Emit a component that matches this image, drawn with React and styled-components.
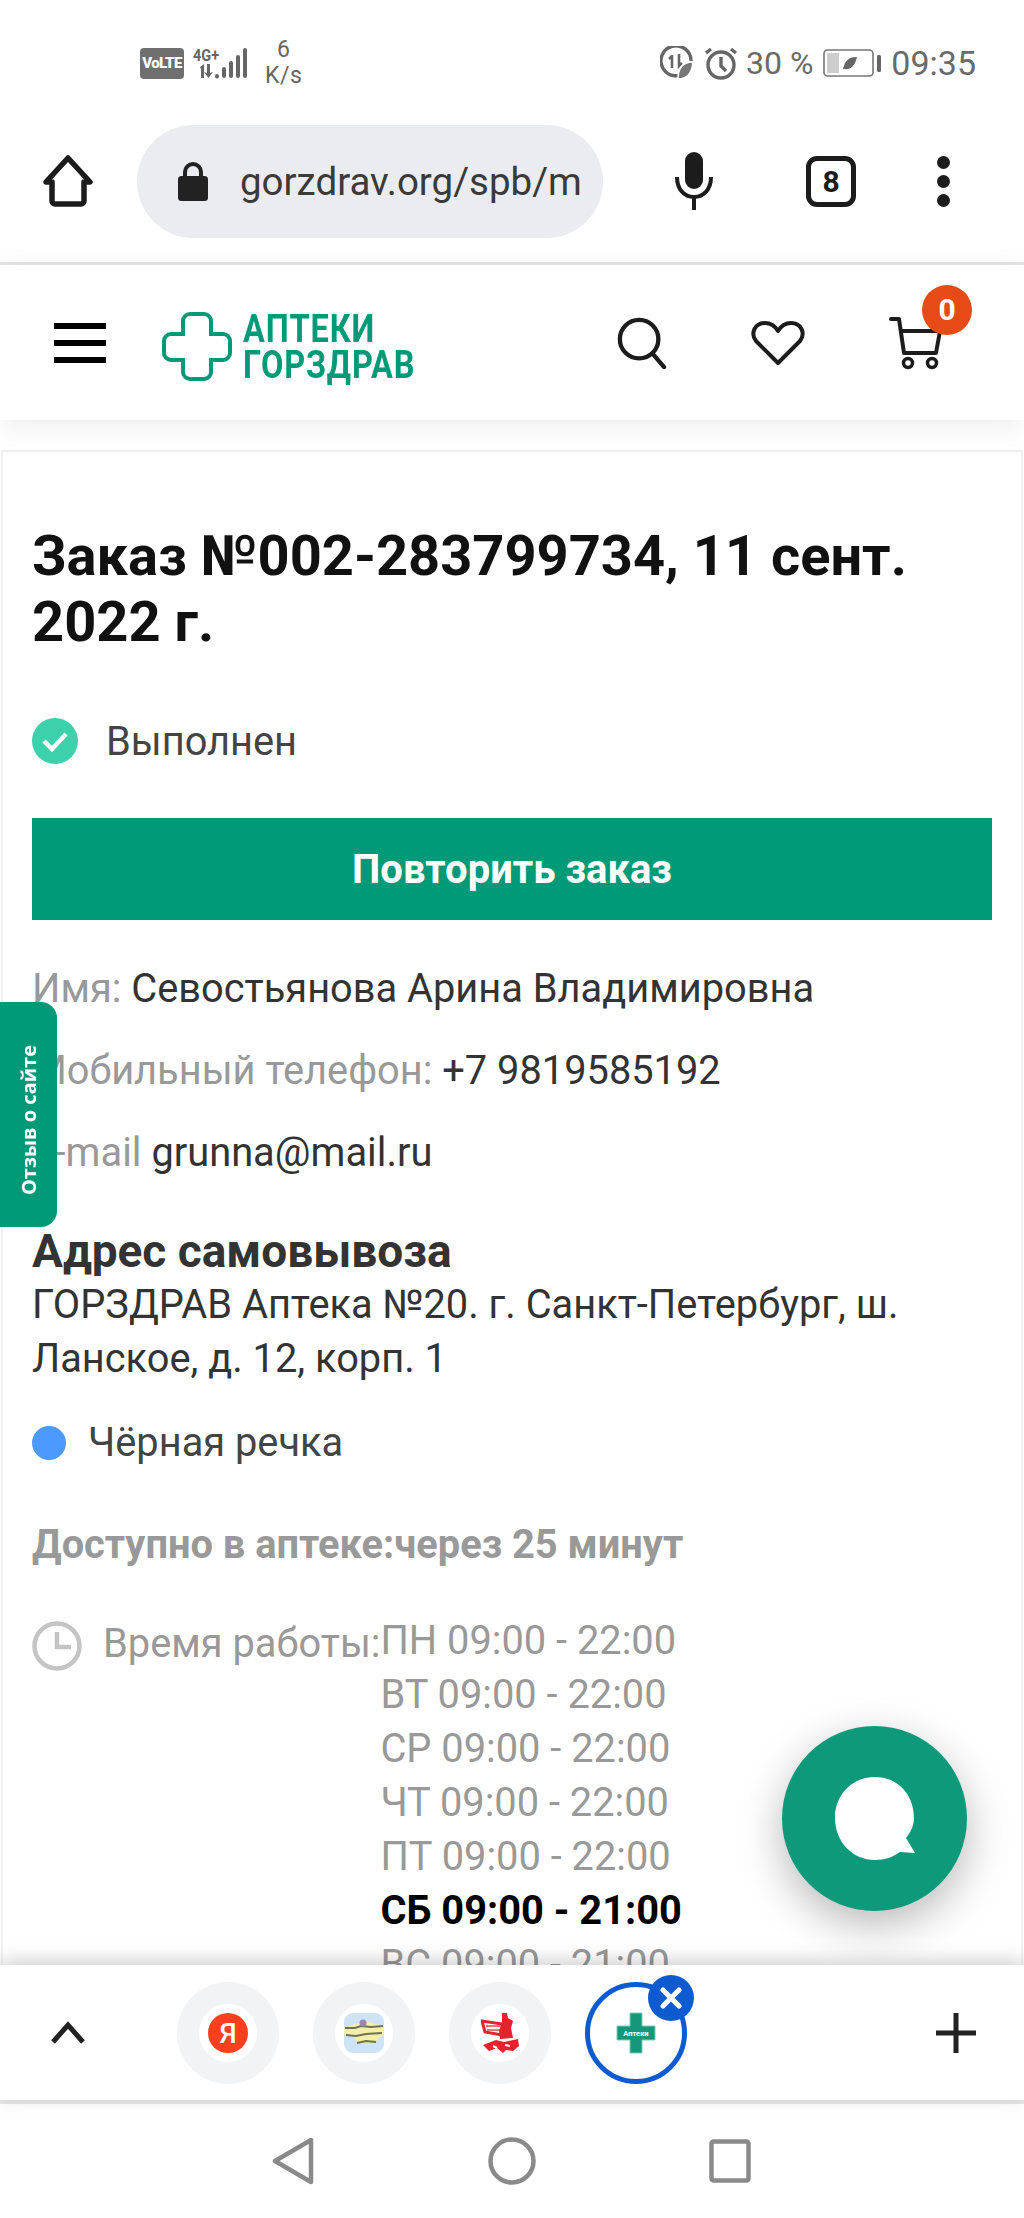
import React from 'react';
import styled, { createGlobalStyle } from 'styled-components';

const GlobalStyle = createGlobalStyle`
  html, body {
    margin: 0;
    padding: 0;
    background: #fff;
  }
  * {
    box-sizing: border-box;
  }
`;

const hours = [
  { day: 'ПН', time: '09:00 - 22:00' },
  { day: 'ВТ', time: '09:00 - 22:00' },
  { day: 'СР', time: '09:00 - 22:00' },
  { day: 'ЧТ', time: '09:00 - 22:00' },
  { day: 'ПТ', time: '09:00 - 22:00' },
  { day: 'СБ', time: '09:00 - 21:00', today: true },
  { day: 'ВС', time: '09:00 - 21:00' },
];

function App() {
  return (
    <Screen>
      <GlobalStyle />
      <StatusBar>
        <StatusLeft>
          <VolteBadge>VoLTE</VolteBadge>
          <SignalIcon />
          <Speed>
            <span>6</span>
            <span>K/s</span>
          </Speed>
        </StatusLeft>
        <StatusRight>
          <DataSaverIcon />
          <AlarmIcon />
          <Percent>30 %</Percent>
          <BatteryIcon />
          <Clock>09:35</Clock>
        </StatusRight>
      </StatusBar>

      <BrowserBar>
        <svg width="50" height="52" viewBox="0 0 50 52" fill="none" stroke="#1c1c1c" strokeWidth="5.5" strokeLinejoin="round">
          <path d="M25 3 47 27H41V46a3 3 0 0 1-3 3H12a3 3 0 0 1-3-3V27H3Z" />
        </svg>
        <UrlPill>
          <svg width="30" height="40" viewBox="0 0 30 40">
            <path d="M7 17V11a8 8 0 0 1 16 0v6" fill="none" stroke="#222" strokeWidth="4" />
            <rect x="0" y="15" width="30" height="25" rx="3.5" fill="#222" />
          </svg>
          <UrlText>gorzdrav.org/spb/m</UrlText>
        </UrlPill>
        <svg width="38" height="58" viewBox="0 0 38 58" fill="none">
          <rect x="10" y="0" width="18" height="37" rx="9" fill="#1c1c1c" />
          <path d="M2 25c0 12 7 20 17 20s17-8 17-20" stroke="#1c1c1c" strokeWidth="4" />
          <path d="M19 44v14" stroke="#1c1c1c" strokeWidth="4" />
        </svg>
        <TabCounter>8</TabCounter>
        <Dots>
          <i />
          <i />
          <i />
        </Dots>
      </BrowserBar>

      <SiteHeader>
        <Burger>
          <i />
          <i />
          <i />
        </Burger>
        <Logo>
          <svg width="70" height="69" viewBox="0 0 70 69" fill="none" stroke="#009a78" strokeWidth="4">
            <path d="M28 2h14a7 7 0 0 1 7 7v13h12a7 7 0 0 1 7 7v12a7 7 0 0 1-7 7H49v12a7 7 0 0 1-7 7H28a7 7 0 0 1-7-7V48H9a7 7 0 0 1-7-7V29a7 7 0 0 1 7-7h12V9a7 7 0 0 1 7-7Z" />
          </svg>
          <LogoText>
            <span>АПТЕКИ</span>
            <span>ГОРЗДРАВ</span>
          </LogoText>
        </Logo>
        <HeaderIcons>
          <svg width="50" height="52" viewBox="0 0 52 54" fill="none" stroke="#1c1c1c" strokeWidth="4.5" strokeLinecap="round">
            <circle cx="23" cy="23" r="20" />
            <path d="M37 38 49 52" />
          </svg>
          <svg width="54" height="46" viewBox="0 0 54 46" fill="none" stroke="#1c1c1c" strokeWidth="4" strokeLinejoin="round">
            <path d="M27 43 5 21C-1 13 4 3 14 3c6 0 10 3 13 8 3-5 7-8 13-8 10 0 15 10 9 18Z" />
          </svg>
          <CartWrap>
            <svg width="56" height="54" viewBox="0 0 56 54" fill="none" stroke="#1c1c1c" strokeWidth="4" strokeLinecap="round" strokeLinejoin="round">
              <path d="M2 3h8l5 34h32l4-22H12" />
              <circle cx="19" cy="47" r="4.5" strokeWidth="3.5" />
              <circle cx="43" cy="47" r="4.5" strokeWidth="3.5" />
            </svg>
            <CartBadge>0</CartBadge>
          </CartWrap>
        </HeaderIcons>
      </SiteHeader>

      <Page>
        <Card>
          <Title>Заказ №002-283799734, 11 сент. 2022 г.</Title>
          <OrderStatus>
            <svg width="46" height="46" viewBox="0 0 46 46">
              <circle cx="23" cy="23" r="23" fill="#3cd1aa" />
              <path d="M12 23l8 8 14-15" fill="none" stroke="#fff" strokeWidth="4.5" />
            </svg>
            Выполнен
          </OrderStatus>
          <RepeatButton>Повторить заказ</RepeatButton>
          <Contacts>
            <ContactRow>
              <Muted>Имя: </Muted>Севостьянова Арина Владимировна
            </ContactRow>
            <ContactRow>
              <Muted>Мобильный телефон: </Muted>+7 9819585192
            </ContactRow>
            <ContactRow>
              <Muted>E-mail </Muted>grunna@mail.ru
            </ContactRow>
          </Contacts>
          <SectionTitle>Адрес самовывоза</SectionTitle>
          <Address>ГОРЗДРАВ Аптека №20. г. Санкт-Петербург, ш. Ланское, д. 12, корп. 1</Address>
          <Metro>
            <MetroDot />
            Чёрная речка
          </Metro>
          <Availability>Доступно в аптеке:через 25 минут</Availability>
          <Schedule>
            <svg width="50" height="50" viewBox="0 0 50 50" fill="none" stroke="#c4c4c4" strokeWidth="4.5">
              <circle cx="25" cy="25" r="22.5" />
              <path d="M25 11v15h14" />
            </svg>
            <ScheduleLabel>Время работы:</ScheduleLabel>
            <HoursList>
              {hours.map((h) => (
                <HoursRow key={h.day} $today={h.today}>
                  {h.day} {h.time}
                </HoursRow>
              ))}
            </HoursList>
          </Schedule>
        </Card>
        <FeedbackTab>
          <span>Отзыв о сайте</span>
        </FeedbackTab>
        <ChatButton>
          <svg width="92" height="92" viewBox="0 0 92 92">
            <path d="M46 4C23 4 6 22 6 45s17 42 40 42c10 0 18-3 25-8l15 1-9-15c5-6 8-13 8-20C85 22 69 4 46 4Z" fill="#fff" />
          </svg>
        </ChatButton>
      </Page>

      <TabStrip>
        <svg width="36" height="24" viewBox="0 0 36 24" fill="none" stroke="#222" strokeWidth="5">
          <path d="M3 21 18 4l15 17" />
        </svg>
        <Tabs>
          <TabCircle>
            <FavSlot>
              <svg width="40" height="40" viewBox="0 0 40 40">
                <circle cx="20" cy="20" r="20" fill="#fc3f1d" />
                <text x="20" y="30" textAnchor="middle" fontFamily="Roboto, sans-serif" fontWeight="500" fontSize="28" fill="#fff">Я</text>
              </svg>
            </FavSlot>
          </TabCircle>
          <TabCircle>
            <FavSlot $soft>
              <svg width="40" height="40" viewBox="0 0 40 40">
                <rect width="40" height="40" rx="9" fill="#cfe3f6" />
                <path d="M0 15 11 11l11-3 17 5 1 8-9 8-16 2-5-7-10-2Z" fill="#f3efa8" />
                <path d="M1 15h10l6-2 10 1 12-1M2 22l10 1 10-2 16-1M13 30l9-2 10 1" stroke="#6f7158" strokeWidth="2" fill="none" />
                <circle cx="19" cy="10" r="3.500" fill="#9a86b5" />
              </svg>
            </FavSlot>
          </TabCircle>
          <TabCircle>
            <FavSlot $soft>
              <svg width="38" height="42" viewBox="0 0 38 42">
                <path d="M1 9l20 3v11L4 20Z" fill="none" stroke="#e5222e" strokeWidth="3" />
                <path d="M5 14h14M6 18h13" stroke="#ee7078" strokeWidth="2" />
                <path d="M21 1l5 0 1 5 5 3-2 7 2 10-13 1-1-8 3-9Z" fill="#e5222e" />
                <path d="M2 33l13-5 8 2 14-3 1 7-6 5-7-1-3 3-6-5-8 3Z" fill="#e5222e" />
                <path d="M12 34l4 2M24 33l5 1" stroke="#fff" strokeWidth="2" />
              </svg>
            </FavSlot>
          </TabCircle>
          <TabCircle $active>
            <FavSlot>
              <svg width="40" height="42" viewBox="0 0 40 42">
                <path d="M14 1h12v13h13v14H26v13H14V28H1V14h13Z" fill="#15977a" stroke="#7ccdb8" strokeWidth="1" strokeLinejoin="round" />
                <rect x="3" y="16" width="34" height="10" fill="#15977a" />
                <text x="20" y="24" textAnchor="middle" fontFamily="Roboto, sans-serif" fontWeight="700" fontSize="7.5" fill="#fff">Аптеки</text>
              </svg>
            </FavSlot>
            <CloseBadge>
              <svg width="22" height="22" viewBox="0 0 22 22" fill="none" stroke="#fff" strokeWidth="5" strokeLinecap="round">
                <path d="M3 3 19 19M19 3 3 19" />
              </svg>
            </CloseBadge>
          </TabCircle>
        </Tabs>
        <svg width="40" height="40" viewBox="0 0 40 40" fill="none" stroke="#222" strokeWidth="5">
          <path d="M20 0v40M0 20h40" />
        </svg>
      </TabStrip>

      <NavBar>
        <svg width="42" height="48" viewBox="0 0 42 48" fill="none" stroke="#8a8a8a" strokeWidth="4.5" strokeLinejoin="round">
          <path d="M39 3v42L3 24Z" />
        </svg>
        <svg width="48" height="48" viewBox="0 0 48 48" fill="none" stroke="#8a8a8a" strokeWidth="4.5">
          <circle cx="24" cy="24" r="21.5" />
        </svg>
        <svg width="42" height="44" viewBox="0 0 42 44" fill="none" stroke="#8a8a8a" strokeWidth="4.5" strokeLinejoin="round">
          <rect x="2.5" y="2.5" width="37" height="39" rx="2" />
        </svg>
      </NavBar>
    </Screen>
  );
}

function SignalIcon() {
  return (
    <svg width="56" height="32" viewBox="0 0 56 32">
      <text x="0" y="14" fontFamily="Roboto, sans-serif" fontWeight="700" fontSize="17" fill="#666" textLength="26" lengthAdjust="spacingAndGlyphs">4G+</text>
      <path d="M7 20l4-3v14H8V22ZM14 17h3v9l3-1-4.500 6-4.500-6 3 1Z" fill="#666" />
      <g fill="#666">
        <rect x="22" y="27" width="4" height="4.500" rx="2" />
        <rect x="29" y="20" width="4" height="11" rx="2" />
        <rect x="36" y="14" width="4" height="17" rx="2" />
        <rect x="43" y="8" width="4" height="23" rx="2" />
        <rect x="50" y="1" width="4" height="30" rx="2" />
      </g>
    </svg>
  );
}

function DataSaverIcon() {
  return (
    <svg width="34" height="34" viewBox="0 0 34 34" fill="none">
      <path d="M27 25A15 15 0 1 1 31 15" stroke="#666" strokeWidth="3.4" />
      <path d="M12 10l-3 3M12 9v13M19 8v12l3-3" stroke="#666" strokeWidth="2.6" />
      <path d="M33 16c-9 0-15 5-15 17 9 0 14-6 15-17Z" fill="#777" stroke="#fff" strokeWidth="1.5" />
    </svg>
  );
}

function AlarmIcon() {
  return (
    <svg width="34" height="34" viewBox="0 0 34 34" fill="none" stroke="#666" strokeWidth="3.4">
      <circle cx="17" cy="19" r="13" />
      <path d="M17 11v9l5 5M2 7l5-4M32 7l-5-4" />
    </svg>
  );
}

function BatteryIcon() {
  return (
    <svg width="58" height="28" viewBox="0 0 58 28">
      <rect x="1" y="1" width="49" height="26" rx="3.500" fill="none" stroke="#777" strokeWidth="1.6" />
      <rect x="4" y="4" width="12" height="20" fill="#cdcdcd" />
      <path d="M34 8c-8 0-12 3-14 12 8 1 12-3 14-12Z" fill="#666" />
      <rect x="54" y="6" width="4" height="17" rx="1.5" fill="#666" />
    </svg>
  );
}

export default App;

const font = `Roboto, "Noto Sans", "Liberation Sans", sans-serif`;

const Screen = styled.div`
  width: 1024px;
  height: 2218px;
  display: flex;
  flex-direction: column;
  overflow: hidden;
  background: #fff;
  font-family: ${font};
`;

const StatusBar = styled.div`
  height: 100px;
  flex: none;
  padding: 26px 48px 0 140px;
  display: flex;
  justify-content: space-between;
  align-items: center;
  color: #666;
`;

const StatusLeft = styled.div`
  display: flex;
  align-items: center;
  gap: 9px;
`;

const VolteBadge = styled.div`
  width: 44px;
  height: 31px;
  border-radius: 4px;
  background: #6f6f6f;
  color: #fff;
  font-size: 15px;
  font-weight: 900;
  letter-spacing: -0.6px;
  line-height: 31px;
  text-align: center;
`;

const Speed = styled.div`
  margin-left: 7px;
  display: flex;
  flex-direction: column;
  align-items: center;
  font-size: 23px;
  line-height: 26px;
  letter-spacing: 0.5px;
`;

const StatusRight = styled.div`
  display: flex;
  align-items: center;
  gap: 10px;
`;

const Percent = styled.span`
  font-size: 32px;
  line-height: 40px;
  color: #6a6a6a;
  margin-left: -2px;
`;

const Clock = styled.span`
  font-size: 34px;
  line-height: 40px;
  color: #6a6a6a;
`;

const BrowserBar = styled.div`
  height: 165px;
  flex: none;
  padding: 26px 0 26px 43px;
  display: flex;
  align-items: center;
  border-bottom: 3px solid #e4e4e2;
  position: relative;

  > svg:nth-of-type(2) {
    margin-left: 72px;
  }
`;

const UrlPill = styled.div`
  width: 466px;
  height: 113px;
  margin-left: 44px;
  padding-left: 41px;
  display: flex;
  align-items: center;
  gap: 32px;
  border-radius: 57px;
  background: #ebecf0;
  overflow: hidden;
`;

const UrlText = styled.span`
  font-size: 38.5px;
  color: #3a3a3a;
  white-space: nowrap;
`;

const TabCounter = styled.div`
  width: 50px;
  height: 51px;
  margin-left: 93px;
  border: 5px solid #1c1c1c;
  border-radius: 11px;
  display: flex;
  align-items: center;
  justify-content: center;
  font-size: 30px;
  font-weight: 700;
  color: #1c1c1c;
`;

const Dots = styled.div`
  margin-left: 81px;
  display: flex;
  flex-direction: column;
  gap: 6px;

  i {
    display: block;
    width: 13px;
    height: 13px;
    border-radius: 50%;
    background: #1c1c1c;
  }
`;

const SiteHeader = styled.div`
  height: 155px;
  flex: none;
  padding: 0 79px 0 54px;
  display: flex;
  align-items: center;
  background: #fff;
  box-shadow: 0 6px 26px rgba(0, 0, 0, 0.08);
  position: relative;
  z-index: 2;
`;

const Burger = styled.div`
  width: 52px;
  display: flex;
  flex-direction: column;
  gap: 11px;

  i {
    display: block;
    height: 6px;
    background: #000;
  }
`;

const Logo = styled.div`
  margin: 8px 0 0 56px;
  display: flex;
  align-items: center;
  gap: 11px;
`;

const LogoText = styled.div`
  display: flex;
  flex-direction: column;
  width: 172px;
  color: #009a78;
  font-size: 38px;
  font-weight: 700;
  line-height: 36px;
  letter-spacing: 1px;
  transform: scaleX(0.855);
  transform-origin: left center;
  white-space: nowrap;
`;

const HeaderIcons = styled.div`
  margin-left: auto;
  display: flex;
  align-items: center;
  gap: 84px;
`;

const CartWrap = styled.div`
  position: relative;
  width: 56px;
  height: 54px;
`;

const CartBadge = styled.div`
  position: absolute;
  top: -31px;
  left: 33px;
  width: 50px;
  height: 50px;
  border-radius: 50%;
  background: #e64b17;
  color: #fff;
  font-size: 30px;
  font-weight: 700;
  line-height: 50px;
  text-align: center;
`;

const Page = styled.div`
  flex: 1;
  min-height: 0;
  position: relative;
  overflow: hidden;
  padding: 30px 1px 0;
`;

const Card = styled.div`
  border: 2px solid #f0f0f0;
  border-bottom: 0;
  padding: 71px 29px 0;
`;

const Title = styled.h1`
  margin: 0;
  font-size: 56px;
  font-weight: 700;
  line-height: 66px;
  color: #111;
`;

const OrderStatus = styled.div`
  margin-top: 63px;
  display: flex;
  align-items: center;
  gap: 28px;
  height: 46px;
  font-size: 39.8px;
  color: #444;
`;

const RepeatButton = styled.button`
  display: block;
  width: 100%;
  height: 102px;
  margin-top: 54px;
  border: 0;
  background: #009a78;
  color: #fff;
  font-family: inherit;
  font-size: 40px;
  font-weight: 700;
`;

const Contacts = styled.div`
  margin-top: 28px;
`;

const ContactRow = styled.div`
  height: 82px;
  line-height: 82px;
  font-size: 39.8px;
  color: #333;
  white-space: nowrap;
`;

const Muted = styled.span`
  color: #999;
`;

const SectionTitle = styled.h2`
  margin: 30px 0 0;
  font-size: 46px;
  font-weight: 700;
  line-height: 54px;
  color: #333;
`;

const Address = styled.div`
  font-size: 39.8px;
  line-height: 54px;
  color: #333;
`;

const Metro = styled.div`
  margin-top: 30px;
  display: flex;
  align-items: center;
  gap: 22px;
  font-size: 39.8px;
  line-height: 54px;
  color: #444;
`;

const MetroDot = styled.span`
  width: 34px;
  height: 34px;
  border-radius: 50%;
  background: #4c9aff;
`;

const Availability = styled.div`
  margin-top: 50px;
  font-size: 39.8px;
  font-weight: 700;
  line-height: 50px;
  color: #999;
`;

const Schedule = styled.div`
  margin-top: 44px;
  display: flex;
  align-items: flex-start;
  color: #999;
  font-size: 39.8px;

  > svg {
    flex: none;
    margin-top: 7px;
  }
`;

const ScheduleLabel = styled.div`
  margin-left: 21px;
  line-height: 54px;
  padding-top: 3px;
`;

const HoursList = styled.div`
  display: flex;
  flex-direction: column;
`;

const HoursRow = styled.div`
  height: 54px;
  line-height: 54px;
  white-space: nowrap;
  color: ${(p) => (p.$today ? '#000' : '#999')};
  font-weight: ${(p) => (p.$today ? 700 : 400)};
`;

const FeedbackTab = styled.div`
  position: absolute;
  left: 0;
  top: 582px;
  width: 57px;
  height: 225px;
  padding-top: 12px;
  border-radius: 0 16px 16px 0;
  background: #009a78;
  color: #fff;
  display: flex;
  align-items: center;
  justify-content: center;
  font-family: "Open Sans", sans-serif;
  font-size: 20px;
  font-weight: 700;

  span {
    writing-mode: vertical-rl;
    transform: rotate(180deg);
    white-space: nowrap;
  }
`;

const ChatButton = styled.div`
  position: absolute;
  left: 782px;
  top: 1306px;
  width: 185px;
  height: 185px;
  border-radius: 50%;
  background: #0f997b;
  box-shadow: 0 14px 44px rgba(0, 0, 0, 0.28);
  display: flex;
  align-items: center;
  justify-content: center;
`;

const TabStrip = styled.div`
  height: 135px;
  flex: none;
  padding: 0 48px 0 50px;
  display: flex;
  align-items: center;
  background: #fff;
  box-shadow: 0 -4px 18px rgba(0, 0, 0, 0.2);
  position: relative;
  z-index: 2;
`;

const Tabs = styled.div`
  margin-left: 91px;
  margin-right: auto;
  display: flex;
  gap: 34px;
`;

const TabCircle = styled.div`
  width: 102px;
  height: 102px;
  border-radius: 50%;
  background: ${(p) => (p.$active ? '#fff' : '#f1f3f5')};
  border: ${(p) => (p.$active ? '5px solid #0e5bd0' : 'none')};
  display: flex;
  align-items: center;
  justify-content: center;
  position: relative;
`;

const FavSlot = styled.div`
  width: 58px;
  height: 58px;
  border-radius: 50%;
  background: #fff;
  display: flex;
  align-items: center;
  justify-content: center;

  svg {
    filter: ${(p) => (p.$soft ? 'blur(0.7px)' : 'none')};
  }
`;

const CloseBadge = styled.div`
  position: absolute;
  top: -12px;
  right: -12px;
  width: 46px;
  height: 46px;
  border-radius: 50%;
  background: #0e5bd0;
  display: flex;
  align-items: center;
  justify-content: center;
`;

const NavBar = styled.div`
  flex: none;
  height: 118px;
  border-top: 4px solid #e8e8e8;
  padding: 0 273px 0 272px;
  display: flex;
  align-items: center;
  justify-content: space-between;
`;
